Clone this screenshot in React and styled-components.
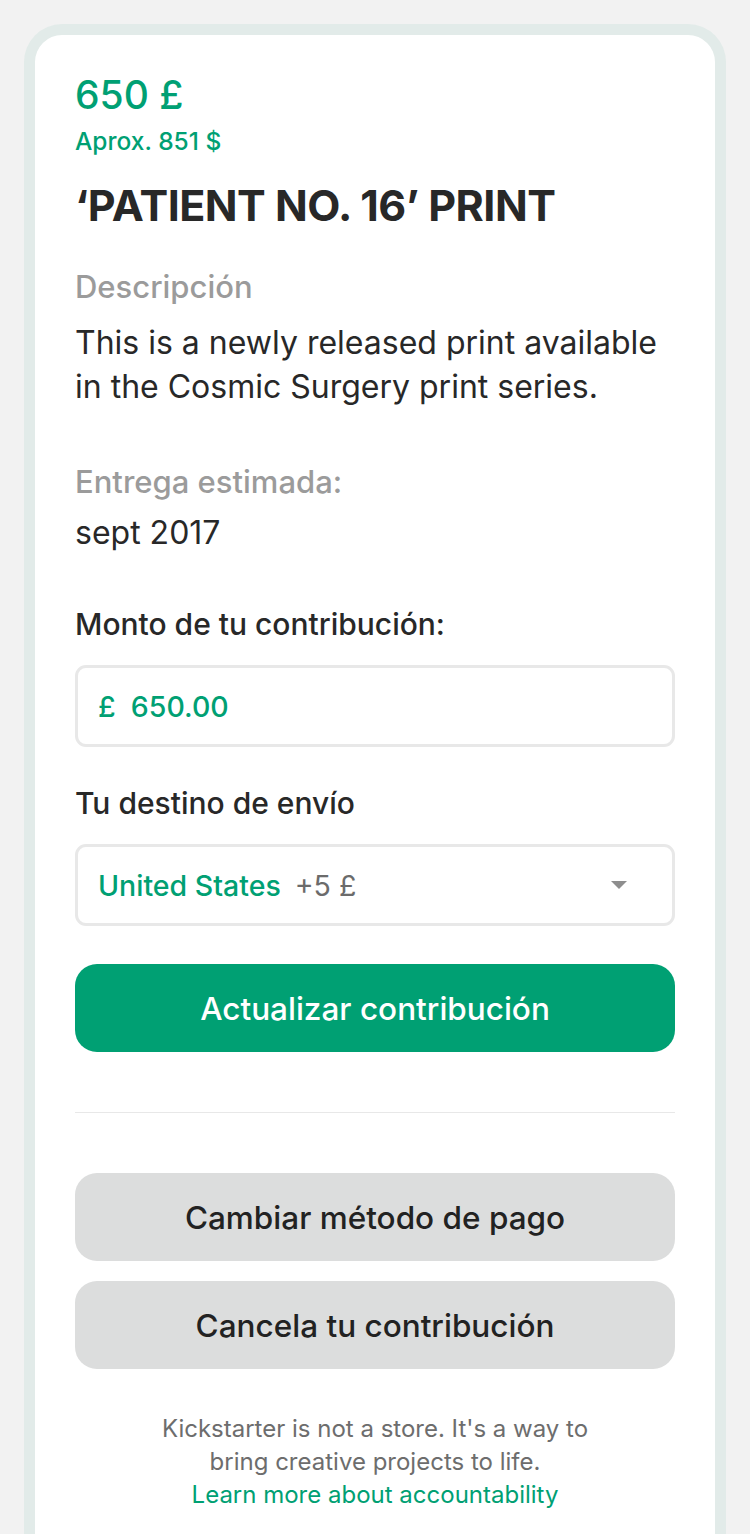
import React from "react";
import styled, { createGlobalStyle } from "styled-components";

const GlobalStyle = createGlobalStyle`
    body {
        margin: 0;
        background: #f2f2f2;
        font-family: Inter, Roboto, "Liberation Sans", sans-serif;
        -webkit-font-smoothing: antialiased;
    }
`;

const Page = styled.div`
    padding: 24px 24px 0;
    height: 1510px;
    overflow: hidden;
`;

const Card = styled.div`
    background: #fff;
    border: 11px solid #e2ebe9;
    border-bottom: none;
    border-radius: 38px 38px 0 0;
    padding: 35px 40px 80px;
    min-height: 1600px;
`;

const Price = styled.div`
    color: #00a073;
    font-size: 39px;
    line-height: 50px;
    font-weight: 500;
`;

const Approx = styled.div`
    color: #00a073;
    font-size: 24.5px;
    line-height: 30px;
    font-weight: 500;
    margin-top: 6px;
`;

const Title = styled.h1`
    margin: 23px 0 0;
    color: #282828;
    font-size: 43px;
    line-height: 52px;
    font-weight: 700;
    letter-spacing: -0.5px;
`;

const MutedLabel = styled.div`
    color: #9b9b9b;
    font-size: 31px;
    line-height: 36px;
    font-weight: 500;
    margin-top: ${p => p.$top}px;
`;

const BodyText = styled.p`
    margin: ${p => p.$top}px 0 0;
    color: #282828;
    font-size: 32px;
    line-height: 44px;
`;

const FieldLabel = styled.div`
    color: #282828;
    font-size: 30px;
    line-height: 38px;
    font-weight: 500;
    margin-top: ${p => p.$top}px;
`;

const Field = styled.div`
    display: flex;
    align-items: center;
    height: 82px;
    box-sizing: border-box;
    margin-top: 22px;
    padding: 0 20px;
    border: 3px solid #e8e8e8;
    border-radius: 11px;
    font-size: 28.5px;
`;

const GreenValue = styled.span`
    color: #00a073;
    font-weight: 500;
`;

const Surcharge = styled.span`
    color: #6b6b6b;
    margin-left: 14px;
    flex: 1;
`;

const Caret = styled.svg`
    width: 16px;
    height: 8px;
    margin-right: 25px;
`;

const Button = styled.button`
    display: block;
    width: 100%;
    height: 88px;
    border: none;
    border-radius: 22px;
    font-family: inherit;
    font-size: 31.5px;
    font-weight: 500;
    background: ${p => (p.$primary ? "#00a073" : "#dcdddd")};
    color: ${p => (p.$primary ? "#fff" : "#222")};
    margin-top: ${p => p.$top}px;
`;

const Divider = styled.hr`
    border: none;
    border-top: 1px solid #e8e8e8;
    margin: 60px 0 60px;
`;

const Footer = styled.p`
    margin: 43px 0 0;
    text-align: center;
    color: #6d6d6d;
    font-size: 24px;
    line-height: 33px;
    padding: 0 70px;
`;

const FooterLink = styled.a`
    display: block;
    color: #00a073;
    text-decoration: none;
`;

const App = () => (
    <>
        <GlobalStyle />
        <Page>
            <Card>
                <Price>650 £</Price>
                <Approx>Aprox. 851 $</Approx>
                <Title>‘PATIENT NO. 16’ PRINT</Title>

                <MutedLabel $top={38}>Descripción</MutedLabel>
                <BodyText $top={16}>
                    This is a newly released print available in the Cosmic Surgery print series.
                </BodyText>

                <MutedLabel $top={55}>Entrega estimada:</MutedLabel>
                <BodyText $top={11}>sept 2017</BodyText>

                <FieldLabel $top={50}>Monto de tu contribución:</FieldLabel>
                <Field>
                    <GreenValue>£&nbsp; 650.00</GreenValue>
                </Field>

                <FieldLabel $top={37}>Tu destino de envío</FieldLabel>
                <Field>
                    <GreenValue>United States</GreenValue>
                    <Surcharge>+5 £</Surcharge>
                    <Caret viewBox="0 0 16 8">
                        <path d="M0 0 H16 L8 8 Z" fill="#8e8e8e" />
                    </Caret>
                </Field>

                <Button $primary $top={38}>Actualizar contribución</Button>

                <Divider />

                <Button $top={0}>Cambiar método de pago</Button>
                <Button $top={20}>Cancela tu contribución</Button>

                <Footer>
                    Kickstarter is not a store. It's a way to bring creative projects to life.
                    <FooterLink href="#">Learn more about accountability</FooterLink>
                </Footer>
            </Card>
        </Page>
    </>
);

export default App;
